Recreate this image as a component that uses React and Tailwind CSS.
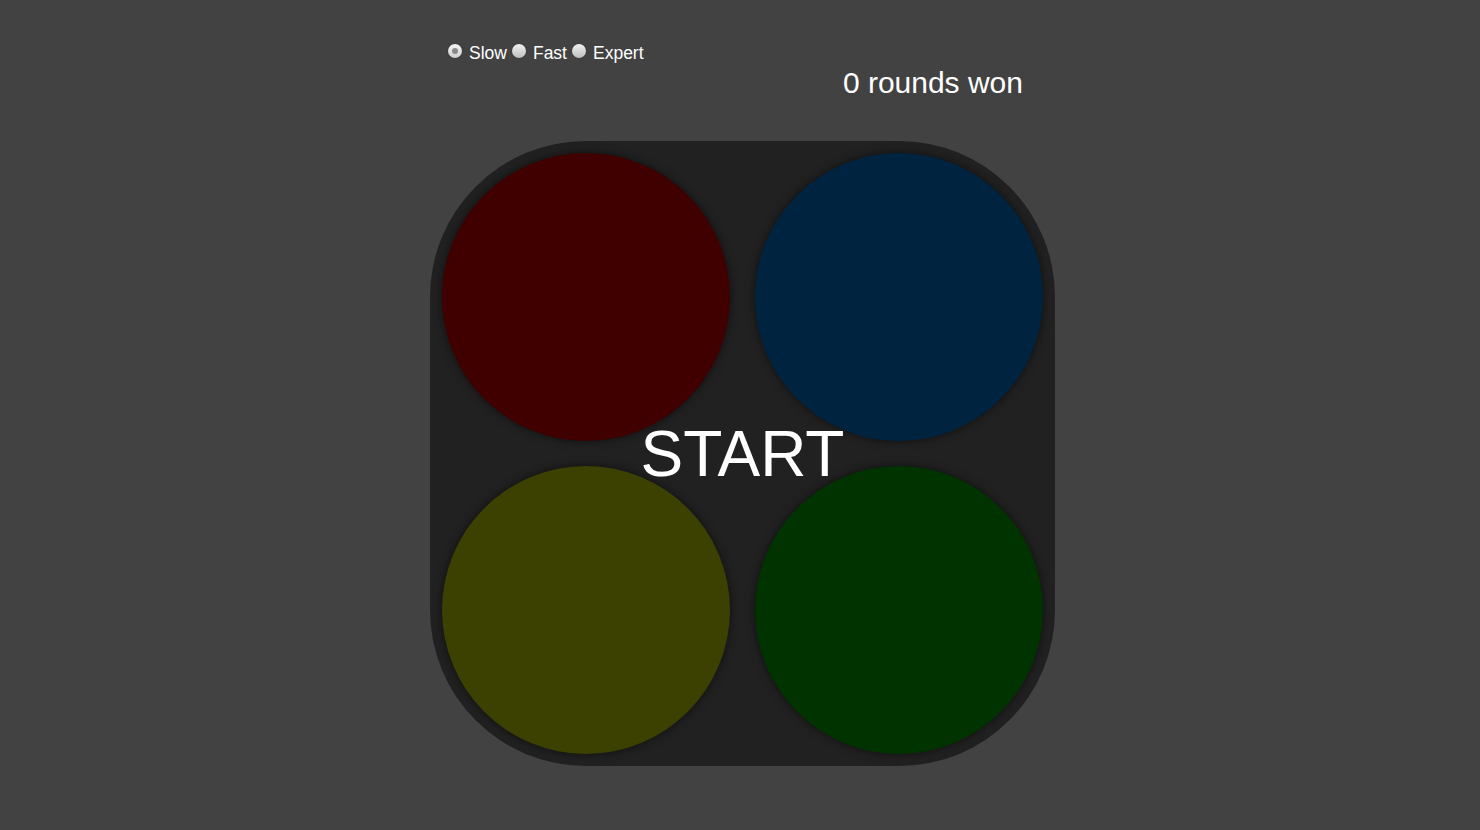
import React from "react";

function Radio({ checked }) {
  return checked ? (
    <span className="inline-flex h-[14px] w-[14px] items-center justify-center rounded-full bg-gradient-to-b from-[#f4f4f4] to-[#d0d0d0] shadow-[0_0_1px_rgba(0,0,0,0.6)]">
      <span className="h-[6px] w-[6px] rounded-full bg-[#8a8a8a]" />
    </span>
  ) : (
    <span className="inline-block h-[14px] w-[14px] rounded-full bg-gradient-to-b from-[#f2f2f2] to-[#bdbdbd] shadow-[0_0_1px_rgba(0,0,0,0.6)]" />
  );
}

export default function App() {
  return (
    <div
      className="min-h-screen w-full bg-[#424242] text-white"
      style={{ fontFamily: '"Liberation Sans", Arial, sans-serif' }}
    >
      <div className="ml-[430px] flex w-[625px] flex-col">
        <div className="mt-[42px] flex h-[20px] items-center pl-[18px] text-[17.5px] leading-none">
          <label className="flex items-center">
            <span className="-mt-[3px] flex"><Radio checked /></span>
            <span className="ml-[7px] mt-[4px]">Slow</span>
          </label>
          <label className="ml-[5px] flex items-center">
            <span className="-mt-[3px] flex"><Radio /></span>
            <span className="ml-[7px] mt-[4px]">Fast</span>
          </label>
          <label className="ml-[5px] flex items-center">
            <span className="-mt-[3px] flex"><Radio /></span>
            <span className="ml-[7px] mt-[4px]">Expert</span>
          </label>
        </div>
        <div className="mt-[5px] flex h-[32px] items-center justify-end pr-[32px] text-[30px] leading-none">
          0 rounds won
        </div>
        <div className="relative mt-[42px] grid h-[625px] w-[625px] grid-cols-2 gap-[25px] rounded-[156px] bg-[#212121] p-[12px]">
          <div className="h-[288px] w-[288px] rounded-full bg-[#400000] shadow-[0_0_10px_rgba(0,0,0,0.55)]" />
          <div className="h-[288px] w-[288px] rounded-full bg-[#002340] shadow-[0_0_10px_rgba(0,0,0,0.55)]" />
          <div className="h-[288px] w-[288px] rounded-full bg-[#3c4000] shadow-[0_0_10px_rgba(0,0,0,0.55)]" />
          <div className="h-[288px] w-[288px] rounded-full bg-[#003300] shadow-[0_0_10px_rgba(0,0,0,0.55)]" />
          <div className="absolute inset-0 flex items-center justify-center">
            <span className="text-[64px] leading-none">START</span>
          </div>
        </div>
      </div>
    </div>
  );
}
